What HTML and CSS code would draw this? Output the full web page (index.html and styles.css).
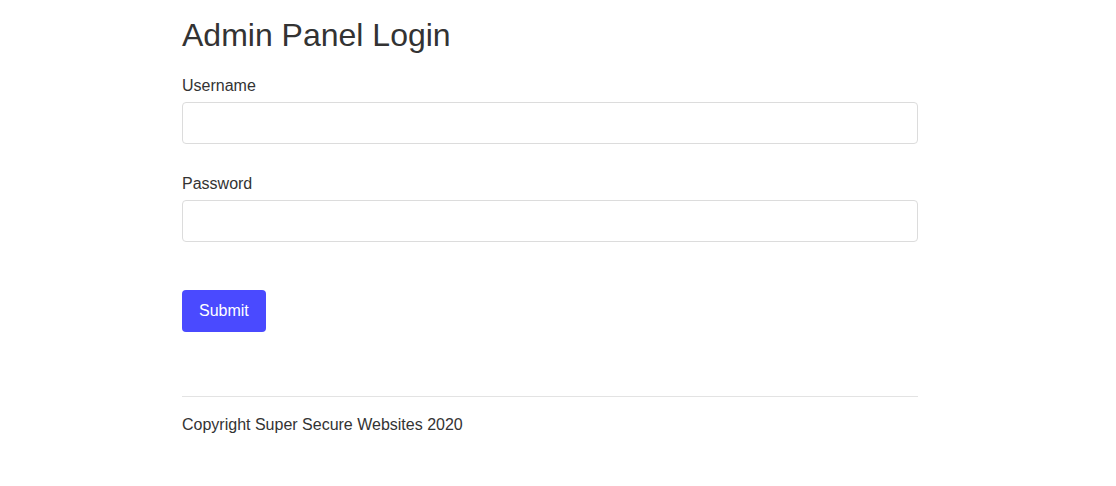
FILE: index.html
```html
<!DOCTYPE html>
<html>
<head>
<meta charset="utf-8">
<title>Admin Panel Login</title>
<link rel="stylesheet" href="styles.css">
</head>
<body>
<main class="page">
  <h1 class="title">Admin Panel Login</h1>
  <form class="form">
    <div class="field">
      <label class="label" for="username">Username</label>
      <input class="input" id="username" type="text">
    </div>
    <div class="field">
      <label class="label" for="password">Password</label>
      <input class="input" id="password" type="password">
    </div>
    <button class="submit" type="button">Submit</button>
  </form>
  <hr class="rule">
  <footer class="footer">Copyright Super Secure Websites 2020</footer>
</main>
</body>
</html>
```
FILE: styles.css
```css
html, body {
  margin: 0;
  padding: 0;
  background: #fff;
}
body {
  font-family: "Liberation Sans", Arial, sans-serif;
  color: #333;
  font-size: 16px;
  line-height: 24px;
}
.page {
  width: 736px;
  margin: 0 0 0 182px;
  padding-top: 18px;
}
.title {
  margin: 0;
  font-size: 32px;
  font-weight: normal;
  line-height: 35px;
}
.form {
  display: flex;
  flex-direction: column;
  align-items: flex-start;
  margin-top: 21px;
}
.field {
  display: flex;
  flex-direction: column;
  align-self: stretch;
  margin-bottom: 28px;
}
.label {
  display: block;
  margin-bottom: 4px;
}
.input {
  box-sizing: border-box;
  height: 42px;
  width: 100%;
  border: 1px solid #dcdcdc;
  border-radius: 4px;
  background: #fff;
  margin: 0;
  padding: 0 10px;
  font: inherit;
}
.submit {
  margin-top: 20px;
  height: 42px;
  padding: 0 17px;
  border: none;
  border-radius: 4px;
  background: #4a4aff;
  color: #fff;
  font-family: inherit;
  font-size: 16px;
  cursor: pointer;
}
.rule {
  margin: 64px 0 0 0;
  border: none;
  border-top: 1px solid #e3e3e3;
  height: 0;
}
.footer {
  margin-top: 16px;
}
```
